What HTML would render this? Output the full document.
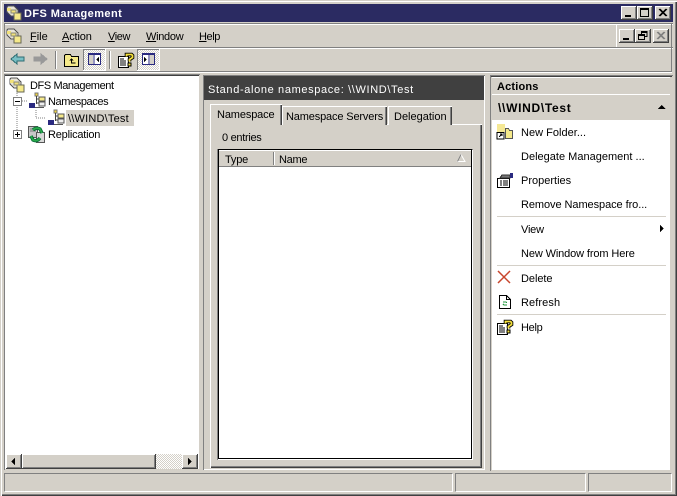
<!DOCTYPE html>
<html><head><meta charset="utf-8"><style>
html,body{margin:0;padding:0}
body{width:677px;height:496px;overflow:hidden;position:relative;background:#d4d0c8;font:11px "Liberation Sans",sans-serif;color:#000}
div,span,svg{position:absolute}
.t{white-space:nowrap;line-height:13px}
.t u{text-decoration:underline}
.btn{background:#d4d0c8;box-shadow:inset -1px -1px 0 #404040,inset 1px 1px 0 #fff,inset -2px -2px 0 #808080}
.sel{background:repeating-conic-gradient(#fff 0 25%,#d4d0c8 0 50%) 0 0/2px 2px;box-shadow:inset -1px -1px 0 #fff,inset 1px 1px 0 #808080}
.sep{background:#d4d0c8;height:1px;left:497px;width:169px}
svg{shape-rendering:crispEdges;overflow:visible}
</style></head><body>
<svg width="0" height="0" style="left:0;top:0">
<defs>
<g id="dfs"><path d="M2 1h6l4 4v3h-3v3H5L1 7V2z" fill="#e8e4d8" stroke="#555"/><path d="M1 3h4v3H1z" fill="#f2e27a"/><path d="M8 8h7v7H8z" fill="#f5e98a" stroke="#665"/><path d="M5 5h5v3H5z" fill="#f2e27a" stroke="#887"/></g>
<g id="ns"><rect x="6" y="0" width="3" height="3" fill="#f2d53c" stroke="#777" stroke-width=".6"/><path d="M7.500 3v8M7.500 6h3M7.500 10h3" stroke="#444" fill="none"/><rect x="10" y="4" width="6" height="4" fill="#f5e98a" stroke="#555" stroke-width=".7"/><rect x="10" y="9" width="6" height="4" fill="#eee" stroke="#555" stroke-width=".7"/><rect x="0" y="10" width="6" height="5" fill="#2a2a80"/><path d="M6 14.500h9" stroke="#555"/></g>
<g id="rep"><rect x="0.500" y="0.500" width="9" height="11" fill="#c8c8c8" stroke="#555"/><path d="M2 3h6M2 5h6" stroke="#777"/><rect x="8.500" y="6.500" width="8" height="10" fill="#d8d8d8" stroke="#555"/><g shape-rendering="auto" fill="none"><path d="M5 4Q8 1 12 3L14 7" stroke="#063" stroke-width="3.400"/><path d="M12 12Q9 16 5 14L3 10" stroke="#063" stroke-width="3.400"/><path d="M5 4Q8 1 12 3L14 7" stroke="#2aa84a" stroke-width="1.800"/><path d="M12 12Q9 16 5 14L3 10" stroke="#2aa84a" stroke-width="1.800"/></g></g>
<g id="help"><path d="M.5 4.500h10v11H.500z" fill="#fff" stroke="#000"/><path d="M2 7h4M2 9h6M2 11h6M2 13h6" stroke="#000"/><g shape-rendering="auto" fill="none"><path d="M8.500 4.500V2.500h5l1 1v2l-3 2v2" stroke="#000" stroke-width="3.600"/><path d="M8.500 4.500V2.500h5l1 1v2l-3 2v2" stroke="#f5e13c" stroke-width="1.800"/></g><rect x="10" y="11" width="3" height="3" fill="#f5e13c" stroke="#000" stroke-width=".8"/></g>
</defs>
</svg>

<!-- window frame -->
<div style="left:0;top:0;width:677px;height:496px;box-shadow:inset 1px 1px 0 #d4d0c8,inset 2px 2px 0 #fff,inset -1px -1px 0 #404040,inset -2px -2px 0 #808080"></div>

<!-- title bar -->
<div style="left:4px;top:4px;width:669px;height:18px;background:#2b2b62"></div>
<svg style="left:6px;top:5px" width="16" height="16"><use href="#dfs"/></svg>
<div class="t" style="left:24px;top:8px;color:#fff;font-weight:bold;font-size:11px;letter-spacing:.42px">DFS Management</div>
<div class="btn" style="left:621px;top:6px;width:16px;height:14px"></div>
<div style="left:625px;top:15px;width:6px;height:2px;background:#000"></div>
<div class="btn" style="left:637px;top:6px;width:16px;height:14px"></div>
<div style="left:640px;top:8px;width:7px;height:6px;border:1px solid #000;border-top-width:2px"></div>
<div class="btn" style="left:655px;top:6px;width:16px;height:14px"></div>
<svg style="left:658px;top:8px" width="10" height="9"><path d="M1 1l7 7M2 1l7 7M8 1L1 8M9 1L2 8" stroke="#000" fill="none" shape-rendering="auto"/></svg>

<!-- menu bar -->
<div style="left:4px;top:23px;width:669px;height:1px;background:#808080"></div>
<div style="left:4px;top:24px;width:669px;height:1px;background:#fff"></div>
<div style="left:4px;top:47px;width:669px;height:1px;background:#808080"></div>
<div style="left:4px;top:48px;width:669px;height:1px;background:#fff"></div>
<div style="left:4px;top:23px;width:1px;height:49px;background:#808080"></div>
<div style="left:671px;top:24px;width:1px;height:48px;background:#808080"></div>
<div style="left:4px;top:71px;width:668px;height:1px;background:#808080"></div>
<div style="left:4px;top:72px;width:668px;height:1px;background:#fff"></div>
<svg style="left:6px;top:28px" width="16" height="16"><use href="#dfs"/></svg>
<div class="t" style="left:30px;top:31px"><u>F</u>ile</div>
<div class="t" style="left:62px;top:31px;letter-spacing:-.15px"><u>A</u>ction</div>
<div class="t" style="left:108px;top:31px;letter-spacing:-.4px"><u>V</u>iew</div>
<div class="t" style="left:146px;top:31px;letter-spacing:-.3px"><u>W</u>indow</div>
<div class="t" style="left:199px;top:31px;letter-spacing:-.4px"><u>H</u>elp</div>
<div style="left:616px;top:25px;width:1px;height:22px;background:#fff"></div>
<div class="btn" style="left:619px;top:29px;width:16px;height:14px"></div>
<div style="left:623px;top:38px;width:6px;height:2px;background:#000"></div>
<div class="btn" style="left:635px;top:29px;width:16px;height:14px"></div>
<svg style="left:638px;top:31px" width="10" height="10"><path d="M3.500 3V.5h5.500v5H7" stroke="#000" fill="none"/><path d="M3.500 1.500h5.500" stroke="#000"/><path d="M.5 3.500h6v5h-6z" stroke="#000" fill="none"/><path d="M.5 4.500h6" stroke="#000"/></svg>
<div class="btn" style="left:653px;top:29px;width:16px;height:14px"></div>
<svg style="left:656px;top:32px" width="10" height="9"><path d="M1 0l7 7M2 0l7 7M8 0L1 7M9 0L2 7" stroke="#808080" fill="none" shape-rendering="auto"/></svg>

<!-- toolbar -->
<svg style="left:10px;top:52px" width="16" height="14"><path d="M1 7l6-5v3h7v4H7v3z" fill="#78bfc4" stroke="#2f6d73" stroke-width="1"/></svg>
<svg style="left:33px;top:52px" width="16" height="14"><path d="M14 7L8 2v3H1v4h7v3z" fill="#999" stroke="#999"/></svg>
<div style="left:55px;top:51px;width:1px;height:18px;background:#808080"></div>
<div style="left:56px;top:51px;width:1px;height:18px;background:#fff"></div>
<svg style="left:64px;top:52px" width="16" height="15"><path d="M.5 3.500V14.500h14v-10h-7l-1-2h-5z" fill="#f5e98a" stroke="#000"/><path d="M7.500 7v4h4" stroke="#000" fill="none"/><path d="M5.500 8.500l2-2.500 2 2.500z" fill="#000"/></svg>
<div class="sel" style="left:83px;top:49px;width:23px;height:22px"></div>
<svg style="left:88px;top:53px" width="14" height="13"><rect x=".5" y=".5" width="12" height="11" fill="#fff" stroke="#2a2a80" stroke-width="1"/><rect x="0" y="0" width="13" height="2" fill="#2a2a80"/><rect x="1" y="2" width="4" height="9" fill="#d4d0c8"/><path d="M6 2v9" stroke="#2a2a80"/><path d="M11 4v5L8 6.500z" fill="#000"/></svg>
<div style="left:109px;top:51px;width:1px;height:18px;background:#808080"></div>
<div style="left:110px;top:51px;width:1px;height:18px;background:#fff"></div>
<svg style="left:118px;top:52px" width="16" height="16"><use href="#help"/></svg>
<div class="sel" style="left:137px;top:49px;width:23px;height:22px"></div>
<svg style="left:142px;top:53px" width="14" height="13"><rect x=".5" y=".5" width="12" height="11" fill="#fff" stroke="#2a2a80" stroke-width="1"/><rect x="0" y="0" width="13" height="2" fill="#2a2a80"/><rect x="8" y="2" width="4" height="9" fill="#d4d0c8"/><path d="M7 2v9" stroke="#2a2a80"/><path d="M2 4v5l3-2.500z" fill="#000"/></svg>

<!-- tree pane -->
<div style="left:4px;top:74px;width:196px;height:396px;background:#fff;box-shadow:inset 1px 1px 0 #808080,inset -1px -1px 0 #d4d0c8"></div>
<div style="left:5px;top:75px;width:194px;height:1px;background:#404040"></div>
<svg style="left:9px;top:77px" width="16" height="16"><use href="#dfs"/></svg>
<div class="t" style="left:30px;top:80px;letter-spacing:-.4px">DFS Management</div>
<svg style="left:0;top:0" width="100" height="150"><path d="M17 93v41M22 101h6M36 110v8h10" stroke="#808080" stroke-dasharray="1 1" fill="none"/></svg>
<div style="left:13px;top:97px;width:7px;height:7px;background:#fff;border:1px solid #808080"></div>
<div style="left:15px;top:101px;width:5px;height:1px;background:#000"></div>
<svg style="left:29px;top:93px" width="16" height="16"><use href="#ns"/></svg>
<div class="t" style="left:48px;top:96px;letter-spacing:-.4px">Namespaces</div>
<svg style="left:48px;top:110px" width="16" height="16"><use href="#ns"/></svg>
<div style="left:66px;top:110px;width:68px;height:16px;background:#d4d0c8"></div>
<div class="t" style="left:68px;top:113px;letter-spacing:.2px">\\WIND\Test</div>
<div style="left:13px;top:130px;width:7px;height:7px;background:#fff;border:1px solid #808080"></div>
<div style="left:15px;top:134px;width:5px;height:1px;background:#000"></div>
<div style="left:17px;top:132px;width:1px;height:5px;background:#000"></div>
<svg style="left:28px;top:126px" width="17" height="17"><use href="#rep"/></svg>
<div class="t" style="left:48px;top:129px;letter-spacing:-.2px">Replication</div>

<!-- tree scrollbar -->
<div style="left:6px;top:454px;width:192px;height:15px;background:repeating-conic-gradient(#fff 0 25%,#d4d0c8 0 50%) 0 0/2px 2px"></div>
<div class="btn" style="left:6px;top:454px;width:16px;height:15px"></div>
<svg style="left:11px;top:458px" width="5" height="8"><path d="M4 0v7L0 3.500z"/></svg>
<div class="btn" style="left:22px;top:454px;width:134px;height:15px"></div>
<div class="btn" style="left:182px;top:454px;width:16px;height:15px"></div>
<svg style="left:188px;top:458px" width="5" height="8"><path d="M0 0v7l4-3.500z"/></svg>

<!-- centre pane -->
<div style="left:203px;top:75px;width:282px;height:395px;box-shadow:inset 1px 1px 0 #808080,inset -1px -1px 0 #fff"></div>
<div style="left:204px;top:76px;width:280px;height:24px;background:#404040"></div>
<div class="t" style="left:208px;top:84px;color:#fff;letter-spacing:.64px">Stand-alone namespace: \\WIND\Test</div>

<!-- tab body -->
<div style="left:210px;top:124px;width:272px;height:344px;background:#d4d0c8;box-shadow:inset 1px 1px 0 #fff,inset -1px -1px 0 #404040,inset -2px -2px 0 #808080"></div>
<!-- tabs -->
<div style="left:282px;top:106px;width:105px;height:19px;background:#d4d0c8;box-shadow:inset 1px 1px 0 #fff,inset -1px 0 0 #404040,inset -2px 0 0 #808080"></div>
<div class="t" style="left:286px;top:111px;letter-spacing:-.15px">Namespace Servers</div>
<div style="left:388px;top:106px;width:64px;height:19px;background:#d4d0c8;box-shadow:inset 1px 1px 0 #fff,inset -1px 0 0 #404040,inset -2px 0 0 #808080"></div>
<div class="t" style="left:394px;top:111px">Delegation</div>
<div style="left:210px;top:104px;width:72px;height:21px;background:#d4d0c8;box-shadow:inset 1px 1px 0 #fff,inset -1px 0 0 #404040,inset -2px 0 0 #808080"></div>
<div class="t" style="left:217px;top:109px;letter-spacing:-.13px">Namespace</div>
<div class="t" style="left:222px;top:132px;letter-spacing:-.3px">0 entries</div>

<!-- list -->
<div style="left:217px;top:149px;width:256px;height:311px;background:#fff;box-shadow:inset 1px 1px 0 #808080,inset -1px -1px 0 #fff"></div>
<div style="left:218px;top:149px;width:254px;height:310px;border:1px solid #000;box-sizing:border-box"></div>
<div style="left:219px;top:150px;width:252px;height:17px;background:#d4d0c8;box-shadow:inset 0 1px 0 #fff,inset 0 -1px 0 #808080"></div>
<div style="left:273px;top:152px;width:1px;height:13px;background:#808080"></div>
<div style="left:274px;top:152px;width:1px;height:13px;background:#fff"></div>
<div class="t" style="left:225px;top:154px;letter-spacing:-.2px">Type</div>
<div class="t" style="left:279px;top:154px;letter-spacing:-.3px">Name</div>
<svg style="left:457px;top:154px" width="9" height="8"><path d="M4 .5L8 7.500H.5z" fill="none" stroke="#fff" shape-rendering="auto"/><path d="M4 .5L.5 7.500" fill="none" stroke="#808080" shape-rendering="auto"/></svg>

<!-- actions pane -->
<div style="left:490px;top:75px;width:183px;height:396px;background:#fff;box-shadow:inset 1px 1px 0 #808080,inset -1px -1px 0 #d4d0c8"></div>
<div style="left:491px;top:76px;width:181px;height:1px;background:#404040"></div>
<div style="left:492px;top:77px;width:178px;height:17px;background:#d4d0c8;border-top:1px solid #fff;box-sizing:border-box"></div>
<div style="left:492px;top:94px;width:178px;height:1px;background:#fff"></div>
<div style="left:492px;top:95px;width:178px;height:25px;background:#d4d0c8"></div>
<div style="left:670px;top:77px;width:2px;height:393px;background:#d4d0c8"></div>
<div style="left:490px;top:77px;width:2px;height:393px;background:#d4d0c8"></div>
<div style="left:490px;top:77px;width:1px;height:393px;background:#808080"></div>
<div class="t" style="left:497px;top:81px;font-weight:bold;letter-spacing:.18px">Actions</div>
<div class="t" style="left:498px;top:102px;font-weight:bold;font-size:12px;letter-spacing:.7px">\\WIND\Test</div>
<svg style="left:658px;top:105px" width="8" height="5"><path d="M3.500 0L7.500 4H0z"/></svg>

<svg style="left:497px;top:124px" width="17" height="16"><path d="M0 0h8v8H0z" fill="#f2e27a" opacity=".8"/><path d="M8.500 4.500h3l1 2h3v8h-7z" fill="#f5e98a" stroke="#555"/><path d="M0 8.500h7v6.500H0z" fill="#fff" stroke="#000"/><path d="M2 13l3-3M3 10h2v2" stroke="#000" fill="none"/></svg>
<div class="t" style="left:521px;top:127px;letter-spacing:.02px">New Folder...</div>
<div class="t" style="left:521px;top:151px;letter-spacing:.01px">Delegate Management ...</div>
<svg style="left:497px;top:172px" width="17" height="16"><path d="M.5 6.500h12v9H.500z" fill="#fff" stroke="#000"/><path d="M3 9h2M6 9h5M3 11h2M6 11h5M3 13h2M6 13h5" stroke="#000"/><path d="M3 6l2-3h8v3z" fill="#777" stroke="#333"/><rect x="13" y="1" width="3" height="5" fill="#2a2a80"/></svg>
<div class="t" style="left:521px;top:175px;letter-spacing:0">Properties</div>
<div class="t" style="left:521px;top:199px;letter-spacing:-.07px">Remove Namespace fro...</div>
<div class="sep" style="top:216px"></div>
<div class="t" style="left:521px;top:224px;letter-spacing:-.2px">View</div>
<svg style="left:660px;top:225px" width="5" height="8"><path d="M0 0v7l4-3.500z"/></svg>
<div class="t" style="left:521px;top:248px;letter-spacing:-.12px">New Window from Here</div>
<div class="sep" style="top:265px"></div>
<svg style="left:497px;top:270px" width="15" height="14"><path d="M1 1l12 12M13 1L1 13" stroke="#c8452c" stroke-width="1.500" fill="none" shape-rendering="auto"/></svg>
<div class="t" style="left:521px;top:273px;letter-spacing:-.05px">Delete</div>
<svg style="left:499px;top:295px" width="13" height="14"><path d="M.5.500h7l4 4v9H.500z" fill="#fff" stroke="#000"/><path d="M7.500.500v4h4" fill="none" stroke="#000"/><path d="M4 7h3l1 1M8 10H5L4 9" stroke="#1f9a3c" fill="none"/></svg>
<div class="t" style="left:521px;top:297px;letter-spacing:.1px">Refresh</div>
<div class="sep" style="top:314px"></div>
<svg style="left:497px;top:319px" width="16" height="16"><use href="#help"/></svg>
<div class="t" style="left:521px;top:322px;letter-spacing:-.3px">Help</div>

<!-- status bar -->
<div style="left:4px;top:473px;width:449px;height:19px;box-sizing:border-box;border:1px solid;border-color:#808080 #fff #fff #808080"></div>
<div style="left:455px;top:473px;width:131px;height:19px;box-sizing:border-box;border:1px solid;border-color:#808080 #fff #fff #808080"></div>
<div style="left:588px;top:473px;width:84px;height:19px;box-sizing:border-box;border:1px solid;border-color:#808080 #fff #fff #808080"></div>
</body></html>
